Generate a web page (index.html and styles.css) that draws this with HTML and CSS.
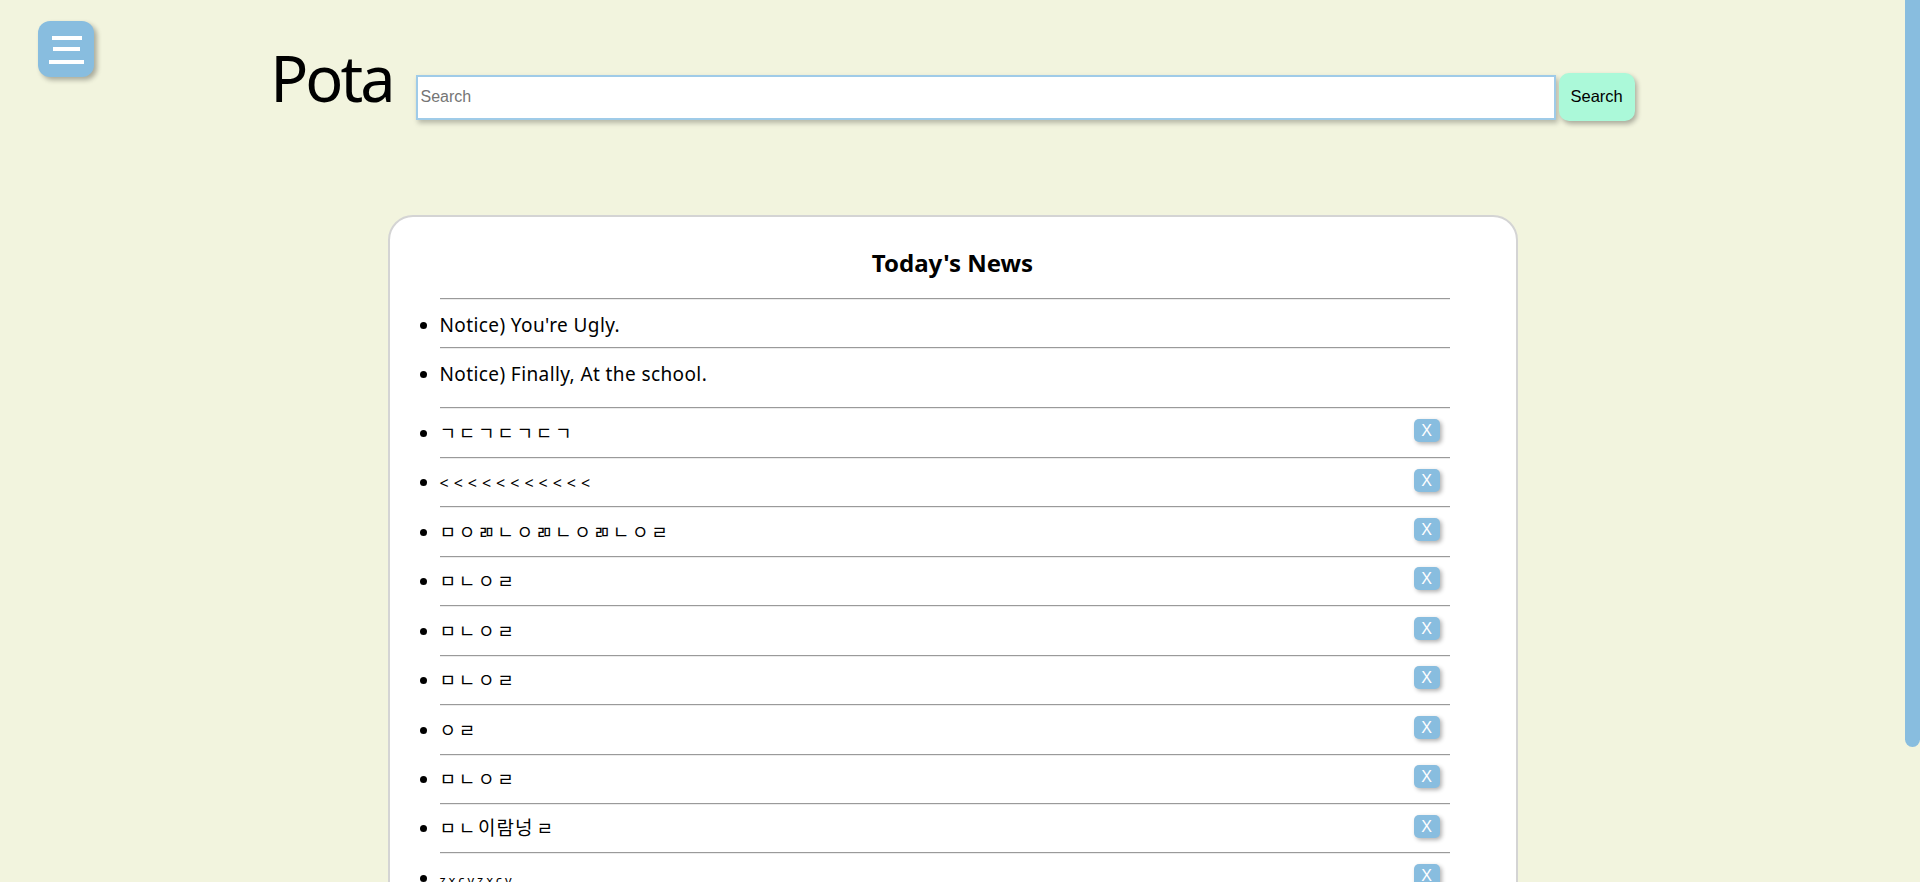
FILE: index.html
```html
<!DOCTYPE html>
<html lang="ko">
<head>
<meta charset="utf-8">
<title>Pota</title>
<link rel="stylesheet" href="styles.css">
</head>
<body>
<button class="menu-btn" type="button" aria-label="menu">
  <svg class="menu-icon" viewBox="0 0 56 56" width="56" height="56">
    <rect x="14" y="15" width="30" height="4" fill="#fff"/>
    <rect x="15" y="26" width="27" height="4" fill="#fff"/>
    <rect x="11" y="39" width="35" height="4" fill="#fff"/>
  </svg>
</button>

<div class="scrollbar" aria-hidden="true"><div class="scroll-thumb"></div></div>

<header class="top">
  <h1 class="logo">Pota</h1>
  <form class="search">
    <input class="search-input" type="text" placeholder="Search">
    <button class="search-btn" type="button">Search</button>
  </form>
</header>

<main class="board">
  <h2 class="board-title">Today's News</h2>
  <ul class="list notices">
    <li>Notice) You're Ugly.</li>
    <li>Notice) Finally, At the school.</li>
  </ul>
  <ul class="list news">
    <li><button class="del" type="button">X</button><span class="jm">ㄱㄷㄱㄷㄱㄷㄱ</span></li>
    <li><button class="del" type="button">X</button><span class="jm lt">&lt;&lt;&lt;&lt;&lt;&lt;&lt;&lt;&lt;&lt;&lt;</span></li>
    <li><button class="del" type="button">X</button><span class="jm">ㅁㅇㄻㄴㅇㄻㄴㅇㄻㄴㅇㄹ</span></li>
    <li><button class="del" type="button">X</button><span class="jm">ㅁㄴㅇㄹ</span></li>
    <li><button class="del" type="button">X</button><span class="jm">ㅁㄴㅇㄹ</span></li>
    <li><button class="del" type="button">X</button><span class="jm">ㅁㄴㅇㄹ</span></li>
    <li><button class="del" type="button">X</button><span class="jm">ㅇㄹ</span></li>
    <li><button class="del" type="button">X</button><span class="jm">ㅁㄴㅇㄹ</span></li>
    <li><button class="del" type="button">X</button><span class="jm">ㅁㄴ</span><span class="syl">이람넝</span><span class="jm">ㄹ</span></li>
    <li><button class="del" type="button">X</button><span class="jm latin">zxcvzxcv</span></li>
  </ul>
</main>
</body>
</html>
```

FILE: styles.css
```css
html {
  background: #f2f4de;
}

body {
  margin: 0;
  padding: 0 15px 30px 0;
  font-family: "Noto Sans", "Noto Sans CJK KR", sans-serif;
  color: #000;
}

/* page scrollbar (drawn, pinned to the window edge) */
.scrollbar {
  position: fixed;
  top: 0;
  right: 0;
  width: 15px;
  height: 100vh;
  background: #f2f4de;
}

.scroll-thumb {
  height: 747px;
  border-radius: 0 0 8px 8px;
  background: #88bddf;
}

/* floating menu button */
.menu-btn {
  position: fixed;
  left: 38px;
  top: 21px;
  width: 56px;
  height: 56px;
  padding: 0;
  border: none;
  border-radius: 12px;
  background: #88bddf;
  box-shadow: 3px 3px 5px rgba(0, 0, 0, 0.3);
  cursor: pointer;
}

.menu-icon {
  display: block;
}

/* header */
.top {
  display: flex;
  justify-content: center;
  align-items: baseline;
  padding-top: 46px;
}

.logo {
  margin: 0 23px 0 0;
  font-size: 63px;
  font-weight: 400;
  line-height: 63px;
  letter-spacing: -3px;
}

.search {
  display: flex;
  align-items: baseline;
  gap: 3px;
  margin: 0;
}

.search-input {
  box-sizing: border-box;
  width: 1140px;
  height: 45px;
  padding: 0 3px;
  border: 2px solid #9fcbe8;
  background: #fff;
  font-family: "Liberation Sans", Arial, sans-serif;
  font-size: 16px;
  outline: none;
  box-shadow: 2px 3px 5px rgba(0, 0, 0, 0.25);
}

.search-input::placeholder {
  color: #757575;
}

.search-btn {
  height: 48px;
  padding: 0 12px;
  border: none;
  border-radius: 10px;
  background: #abf9d9;
  color: #000;
  font-family: "Liberation Sans", Arial, sans-serif;
  font-size: 16.5px;
  box-shadow: 2px 3px 5px rgba(0, 0, 0, 0.3);
  cursor: pointer;
}

/* news board */
.board {
  box-sizing: border-box;
  width: 1130px;
  min-height: 797px;
  margin: 94px auto 0;
  padding-top: 30px;
  border: 2px solid #d4d4d4;
  border-radius: 25px;
  background: #fff;
}

.board-title {
  margin: 0;
  font-size: 24px;
  font-weight: 700;
  line-height: 32px;
  text-align: center;
}

.list {
  margin: 0 66px 0 10px;
  padding-left: 40px;
  list-style: disc;
}

.notices {
  margin-top: 19.5px;
}

.news {
  margin-top: 10.6px;
}

.list li {
  box-sizing: border-box;
  height: 49.44px;
  padding-top: 1.5px;
  border-top: 1px solid #9a9a9a;
  box-shadow: inset 0 1px 0 #ececec;
  font-size: 19px;
  letter-spacing: 0.4px;
  line-height: 47px;
}

.notices li {
  padding-top: 2.5px;
  line-height: 46px;
}

.jm {
  font-size: 18px;
  letter-spacing: 2.7px;
}

.jm.lt {
  font-size: 16px;
  letter-spacing: 5px;
}

.jm.latin {
  font-size: 13px;
  letter-spacing: 3px;
}

.syl {
  letter-spacing: 1px;
  margin-right: 3px;
}

.del {
  float: right;
  width: 26px;
  height: 23px;
  margin: 9.2px 10px 0 0;
  padding: 0;
  border: none;
  border-radius: 5px;
  background: #88bddf;
  color: #fff;
  font-family: "Liberation Sans", Arial, sans-serif;
  font-size: 16px;
  letter-spacing: 0;
  line-height: 23px;
  box-shadow: 2px 2px 4px rgba(0, 0, 0, 0.3);
  cursor: pointer;
}
```
